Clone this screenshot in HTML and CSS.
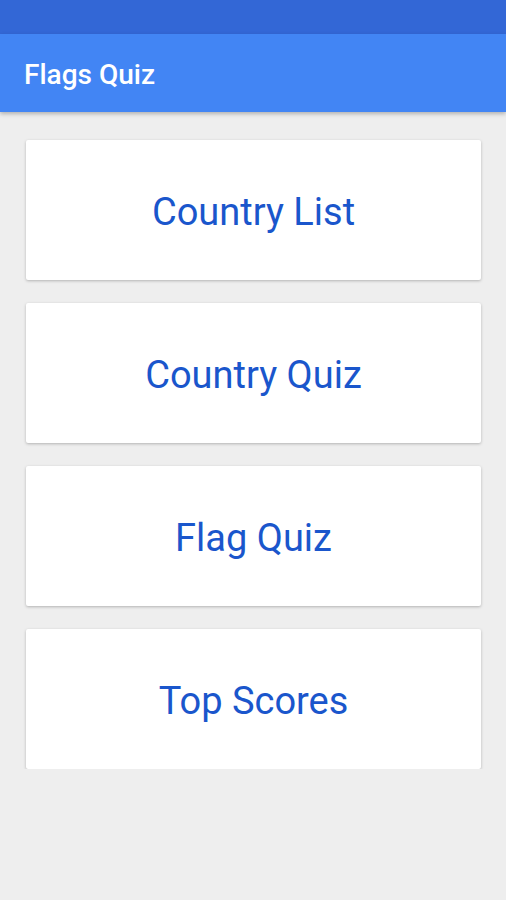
FILE: index.html
```html
<!DOCTYPE html>
<html lang="en">

<head>
  <meta charset="UTF-8" />
  <meta name="viewport" content="width=device-width, initial-scale=1" />
  <title>Flags Quiz</title>
  <link rel="stylesheet" href="styles.css">
</head>

<body>

  <div class="status-bar"></div>

  <header class="app-bar">Flags Quiz</header>

  <main class="menu">
    <button class="menu-card">Country List</button>
    <button class="menu-card">Country Quiz</button>
    <button class="menu-card">Flag Quiz</button>
    <button class="menu-card">Top Scores</button>
  </main>

</body>

</html>
```

FILE: styles.css
```css
body {
  margin: 0;
  background-color: #eeeeee;
  font-family: Roboto, "Noto Sans", sans-serif;
}

.status-bar {
  height: 34px;
  background-color: #3367d6;
}

.app-bar {
  height: 78px;
  background-color: #4285f4;
  color: white;
  font-size: 28px;
  font-weight: 500;
  display: flex;
  align-items: center;
  padding: 3px 24px 0;
  box-sizing: border-box;
  box-shadow: 0 2px 4px rgba(0, 0, 0, 0.25);
  position: relative;
}

.menu {
  display: flex;
  flex-direction: column;
  gap: 23px;
  padding: 28px 25px 0 26px;
}

.menu-card {
  height: 140px;
  padding: 4px 0 0;
  background-color: white;
  border: none;
  border-radius: 2px;
  box-shadow: 0 1px 3px rgba(0, 0, 0, 0.25);
  font-family: inherit;
  font-size: 38px;
  color: #1a56cc;
  cursor: pointer;
}
```
